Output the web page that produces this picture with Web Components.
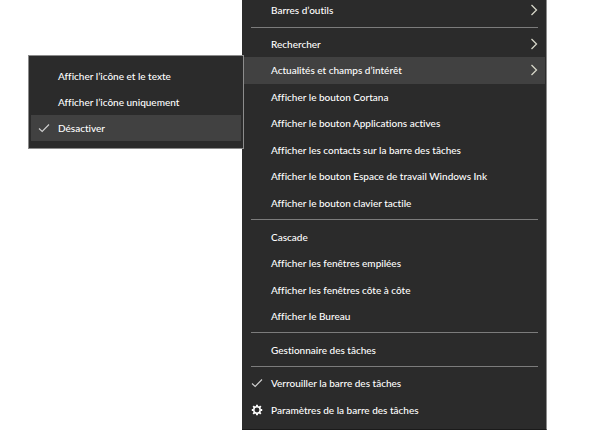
<!DOCTYPE html>
<html lang="fr">
<head>
<meta charset="utf-8">
<title>Barre des tâches</title>
<style>
    body {
        margin: 0;
        background: #ffffff;
        overflow: hidden;
    }
</style>
</head>
<body>
<task-bar-menu></task-bar-menu>

<script>
class MenuItem extends HTMLElement {

    constructor() {
        super();
        this.shadow = this.attachShadow({mode: 'open'});
        this.shadow.innerHTML = this.styles() + this.html();
    }

    icon() {
        const icons = {
            check: `<svg viewBox="0 0 12 12"><path d="M1 6.5 L4.2 9.5 L11 2.5" fill="none" stroke="#d0d0d0" stroke-width="1.1"/></svg>`,
            gear: `<svg viewBox="0 0 12 12"><g stroke="#ffffff" fill="none"><circle cx="6" cy="6" r="3.2" stroke-width="1.5"/><path stroke-width="1.9" d="M6 .8V2.4M6 9.6V11.2M.8 6H2.4M9.6 6H11.2M2.2 2.2L3.4 3.4M8.6 8.6L9.8 9.8M9.8 2.2L8.6 3.4M3.4 8.6L2.2 9.8"/></g></svg>`
        };
        return icons[this.getAttribute('icon')] || '';
    }

    arrow() {
        return this.hasAttribute('arrow')
            ? `<svg class="arrow" viewBox="0 0 8 12"><path d="M1.5 1 L6.5 6 L1.5 11" fill="none" stroke="#d6d6c8" stroke-width="1.3"/></svg>`
            : '';
    }

    styles() {
        return `<style>
            :host {
                display: flex;
                flex: 1 0 26px;
                position: relative;
            }

            button {
                flex: 1;
                display: grid;
                grid-template-columns: 12px 1fr 8px;
                column-gap: 8px;
                align-items: center;
                margin: 0;
                padding: 0 7px;
                border: 0;
                background: none;
                color: #ffffff;
                font: inherit;
                font-variant-ligatures: none;
                text-align: left;
                white-space: nowrap;
                outline: none;
            }

            :host([selected]) button,
            button:hover {
                background: #414141;
            }

            .icon, svg {
                display: block;
                height: 12px;
            }

            .icon svg {
                width: 12px;
            }

            .arrow {
                width: 8px;
            }
        </style>`;
    }

    html() {
        return `<button type="button" role="menuitem">
                    <span class="icon">${this.icon()}</span>
                    <span><slot></slot></span>
                    ${this.arrow()}
                </button>
                <slot name="submenu"></slot>`;
    }

}
customElements.define('menu-item', MenuItem);

class MenuDivider extends HTMLElement {

    constructor() {
        super();
        this.shadow = this.attachShadow({mode: 'open'});
        this.shadow.innerHTML = `<style>
            :host {
                display: flex;
                flex: 0 0 7px;
                align-items: center;
                padding: 0 7px;
            }

            hr {
                flex: 1;
                margin: 0;
                border: 0;
                border-top: 1px solid #7c7c7c;
            }
        </style><hr>`;
    }

}
customElements.define('menu-divider', MenuDivider);

class SubMenu extends HTMLElement {

    constructor() {
        super();
        this.shadow = this.attachShadow({mode: 'open'});
        this.shadow.innerHTML = `<style>
            :host {
                display: flex;
                flex-direction: column;
                position: absolute;
                top: -2px;
                right: 100%;
                box-sizing: border-box;
                width: 216px;
                padding: 7px 2px;
                border: 1px solid #8c8c8c;
                background: #2b2b2b;
                font-variant-ligatures: none;
            }
        </style><slot></slot>`;
    }

}
customElements.define('sub-menu', SubMenu);

class TaskBarMenu extends HTMLElement {

    constructor() {
        super();
        this.shadow = this.attachShadow({mode: 'open'});
        this.shadow.innerHTML = this.styles() + this.html();
    }

    styles() {
        return `<style>
            :host {
                display: grid;
                grid-template-columns: 242fr 305fr 53fr;
                font: 500 10px/14px Lato, "Open Sans", sans-serif;
                font-variant-ligatures: none;
            }

            nav {
                grid-column: 2;
                display: flex;
                flex-direction: column;
                box-sizing: border-box;
                min-height: calc(100vh + 3px);
                margin-top: -3px;
                padding: 0 1px 6px 2px;
                border-right: 1px solid #8c8c8c;
                border-bottom: 1px solid #1a1a1a;
                background: #2b2b2b;
            }
        </style>`;
    }

    html() {
        return `<nav role="menu">
                    <menu-item arrow>Barres d’outils</menu-item>
                    <menu-divider></menu-divider>
                    <menu-item arrow>Rechercher</menu-item>
                    <menu-item arrow selected>Actualités et champs d’intérêt
                        <sub-menu slot="submenu" role="menu">
                            <menu-item>Afficher l’icône et le texte</menu-item>
                            <menu-item>Afficher l’icône uniquement</menu-item>
                            <menu-item icon="check" selected>Désactiver</menu-item>
                        </sub-menu>
                    </menu-item>
                    <menu-item>Afficher le bouton Cortana</menu-item>
                    <menu-item>Afficher le bouton Applications actives</menu-item>
                    <menu-item>Afficher les contacts sur la barre des tâches</menu-item>
                    <menu-item>Afficher le bouton Espace de travail Windows Ink</menu-item>
                    <menu-item>Afficher le bouton clavier tactile</menu-item>
                    <menu-divider></menu-divider>
                    <menu-item>Cascade</menu-item>
                    <menu-item>Afficher les fenêtres empilées</menu-item>
                    <menu-item>Afficher les fenêtres côte à côte</menu-item>
                    <menu-item>Afficher le Bureau</menu-item>
                    <menu-divider></menu-divider>
                    <menu-item>Gestionnaire des tâches</menu-item>
                    <menu-divider></menu-divider>
                    <menu-item icon="check">Verrouiller la barre des tâches</menu-item>
                    <menu-item icon="gear">Paramètres de la barre des tâches</menu-item>
                </nav>`;
    }

}
customElements.define('task-bar-menu', TaskBarMenu);
</script>
</body>
</html>
